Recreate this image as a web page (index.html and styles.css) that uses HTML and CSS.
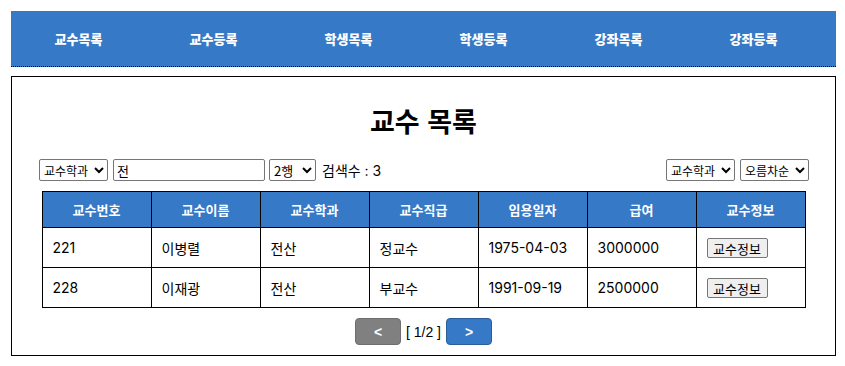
FILE: index.html
```html
<!DOCTYPE html>
<html lang="ko">
<head>
  <meta charset="UTF-8" />
  <title>교수 목록</title>
  <link rel="stylesheet" href="styles.css">
</head>
<body>
  <nav class="menu">
    <a href="#">교수목록</a>
    <a href="#">교수등록</a>
    <a href="#">학생목록</a>
    <a href="#">학생등록</a>
    <a href="#">강좌목록</a>
    <a href="#">강좌등록</a>
  </nav>

  <div class="page">
    <h2 class="title">교수 목록</h2>

    <div class="toolbar">
      <div class="search">
        <select class="sel sel-key">
          <option>교수학과</option>
          <option>교수이름</option>
        </select>
        <input class="word" type="text" value="전">
        <select class="sel sel-size">
          <option>2행</option>
          <option>5행</option>
        </select>
        <span class="total">검색수 : 3</span>
      </div>
      <div class="sort">
        <select class="sel sel-key">
          <option>교수학과</option>
        </select>
        <select class="sel sel-key">
          <option>오름차순</option>
          <option>내림차순</option>
        </select>
      </div>
    </div>

    <table class="list">
      <thead>
        <tr>
          <th>교수번호</th>
          <th>교수이름</th>
          <th>교수학과</th>
          <th>교수직급</th>
          <th>임용일자</th>
          <th>급여</th>
          <th>교수정보</th>
        </tr>
      </thead>
      <tbody>
        <tr>
          <td>221</td>
          <td>이병렬</td>
          <td>전산</td>
          <td>정교수</td>
          <td>1975-04-03</td>
          <td>3000000</td>
          <td><button class="info">교수정보</button></td>
        </tr>
        <tr>
          <td>228</td>
          <td>이재광</td>
          <td>전산</td>
          <td>부교수</td>
          <td>1991-09-19</td>
          <td>2500000</td>
          <td><button class="info">교수정보</button></td>
        </tr>
      </tbody>
    </table>

    <div class="pager">
      <button class="pbtn prev">&lt;</button>
      <span class="pnum">[ 1/2 ]</span>
      <button class="pbtn next">&gt;</button>
    </div>
  </div>
</body>
</html>
```

FILE: styles.css
```css
* { box-sizing: border-box; }

body {
  margin: 0;
  padding: 11px 9px 0 11px;
  font-family: Inter, 'Noto Sans CJK KR', sans-serif;
  color: #000;
  background: #fff;
}

.menu {
  display: flex;
  height: 56px;
  align-items: center;
  background: #3679c6;
  border-bottom: 1px dotted #000;
}

.menu a {
  width: 135px;
  text-align: center;
  color: #fff;
  font-size: 13px;
  font-weight: 900;
  text-decoration: none;
  font-family: 'Noto Sans CJK KR', sans-serif;
}

.page {
  margin-top: 9px;
  border: 1px solid #000;
  padding: 29px 0 10px;
}

.title {
  margin: 0;
  text-align: center;
  font-size: 27px;
  line-height: 30px;
  font-weight: 700;
  font-family: 'Noto Sans CJK KR', sans-serif;
}

.toolbar {
  display: flex;
  justify-content: space-between;
  align-items: center;
  margin-top: 23px;
  padding: 0 26px 0 27px;
}

.search, .sort {
  display: flex;
  align-items: center;
  gap: 5px;
}

.sel {
  height: 22px;
  font-size: 12px;
  font-family: 'Noto Sans CJK KR', sans-serif;
  border: 1px solid #767676;
  border-radius: 2px;
  background: #fff;
  padding: 0;
}

.sel-key { width: 69px; }
.sel-size { width: 47px; margin-left: -1px; font-size: 13px; }

.word {
  width: 152px;
  height: 22px;
  font-size: 13px;
  font-family: 'Noto Sans CJK KR', sans-serif;
  border: 1px solid #767676;
  border-radius: 2px;
  padding: 0 3px;
}

.total {
  font-size: 14px;
  margin-left: 1px;
}

.list {
  width: 764px;
  margin: 10px auto 0;
  border-collapse: collapse;
  table-layout: fixed;
}

.list th, .list td {
  border: 1px solid #000;
}

.list th {
  height: 36px;
  background: #3679c6;
  color: #fff;
  font-size: 13px;
  font-weight: 700;
  font-family: 'Noto Sans CJK KR', sans-serif;
}

.list td {
  height: 40px;
  padding: 0 10px;
  font-size: 14px;
}

.info {
  width: 61px;
  height: 20px;
  padding: 0;
  font-size: 13px;
  font-family: 'Noto Sans CJK KR', sans-serif;
  background: #efefef;
  border: 1px solid #767676;
  border-radius: 2px;
}

.pager {
  display: flex;
  justify-content: center;
  align-items: center;
  margin-top: 10px;
}

.pbtn {
  width: 46px;
  height: 27px;
  border-radius: 4px;
  color: #fff;
  font-size: 14px;
  font-weight: 700;
  font-family: 'Liberation Sans', sans-serif;
  cursor: pointer;
}

.prev {
  background: #808080;
  border: 1px solid #6e6e6e;
}

.next {
  background: #3679c6;
  border: 1px solid #2b5e99;
}

.pnum {
  font-size: 14px;
  font-family: 'Liberation Sans', sans-serif;
  margin: 0 5px;
}
```
